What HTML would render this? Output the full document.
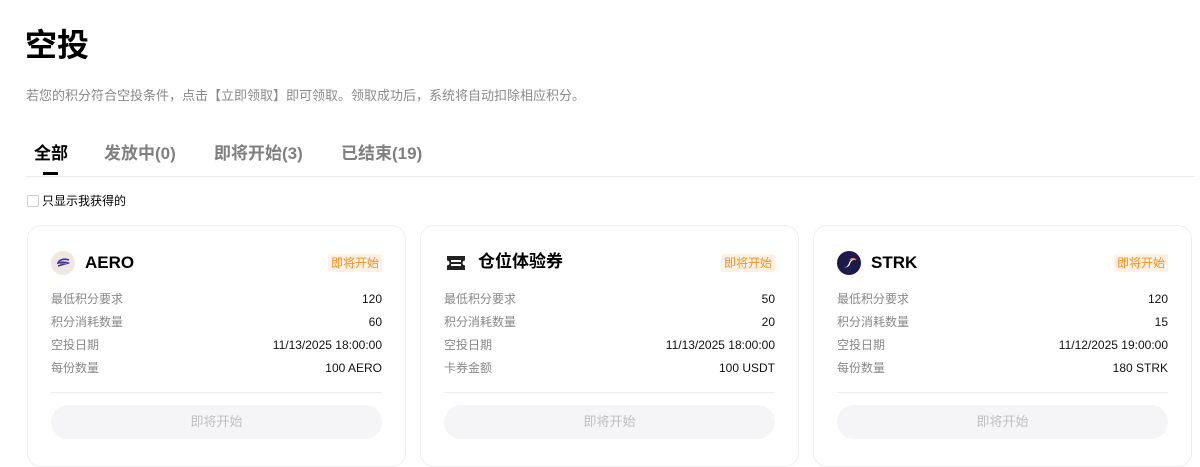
<!DOCTYPE html>
<html><head><meta charset="utf-8"><style>
body{margin:0;background:#fff;font-family:"Liberation Sans","Noto Sans CJK SC",sans-serif;color:#000;width:1200px;height:454px;overflow:hidden;position:relative}
.a{position:absolute}
h1{position:absolute;left:25px;top:23px;margin:0;font-size:32px;font-weight:700;line-height:44px}
.sub{left:26px;top:87px;font-size:13px;color:#8a8a8a;line-height:18px}
.tab{top:142px;font-size:17px;font-weight:700;color:#808080;line-height:24px}
.card{top:225px;width:377px;height:240px;border:1px solid #eee;border-radius:14px;background:#fff}
.hd{position:absolute;left:23px;top:25px;height:24px;display:flex;align-items:center;font-size:17px;font-weight:700;line-height:24px}
.ic{width:24px;height:24px;border-radius:50%;margin-right:10px;flex:none}
.tag{position:absolute;right:23px;top:28px;background:#fff1e6;color:#f7931a;font-size:12px;padding:1px 3px;line-height:16px;border-radius:2px}
.row{position:absolute;left:23px;right:23px;display:flex;justify-content:space-between;font-size:12px;line-height:16px}
.row span:first-child{color:#888}
.row span:last-child{color:#111}
.line{position:absolute;left:23px;right:23px;top:166px;border-top:1px solid #eee}
.btn{position:absolute;left:23px;right:23px;top:179px;height:34px;border-radius:17px;background:#f5f5f7;color:#c0c0c0;font-size:13px;text-align:center;line-height:34px}
</style></head><body>
<h1>空投</h1>
<div class="a sub">若您的积分符合空投条件，点击【立即领取】即可领取。领取成功后，系统将自动扣除相应积分。</div>
<div class="a tab" style="left:34px;color:#000">全部</div>
<div class="a tab" style="left:104px">发放中(0)</div>
<div class="a tab" style="left:214px">即将开始(3)</div>
<div class="a tab" style="left:341px">已结束(19)</div>
<div class="a" style="left:43px;top:172px;width:15px;height:3px;background:#000"></div>
<div class="a" style="left:25px;top:176px;width:1170px;border-top:1px solid #ececec"></div>
<div class="a" style="left:27px;top:195px;width:10px;height:10px;border:1px solid #ccc;border-radius:2px"></div>
<div class="a" style="left:42px;top:193px;font-size:12px;line-height:16px">只显示我获得的</div>

<div class="a card" style="left:27px">
<div class="hd"><div class="ic" style="background:#eee8e0;display:flex;align-items:center;justify-content:center"><svg width="14" height="10" viewBox="0 0 14 10"><path d="M13 2C8 0 3 2 2 5c3-1 7-1 10 0C9 6 5 7 2 8" stroke="#3a2fa8" stroke-width="1.6" fill="none"/><path d="M4 5.5h7" stroke="#e44" stroke-width="1.2"/></svg></div>AERO</div>
<div class="tag">即将开始</div>
<div class="row" style="top:65px"><span>最低积分要求</span><span>120</span></div>
<div class="row" style="top:88px"><span>积分消耗数量</span><span>60</span></div>
<div class="row" style="top:111px"><span>空投日期</span><span>11/13/2025 18:00:00</span></div>
<div class="row" style="top:134px"><span>每份数量</span><span>100 AERO</span></div>
<div class="line"></div><div class="btn">即将开始</div></div>

<div class="a card" style="left:420px">
<div class="ic a" style="left:23px;top:25px;border-radius:0;display:flex;align-items:center;justify-content:center"><svg width="20" height="16" viewBox="0 0 20 16"><path d="M1 1h18v4.5a2.5 2.5 0 0 0 0 5V15H1v-4.5a2.5 2.5 0 0 0 0-5z" fill="#222"/><rect x="5" y="5" width="10" height="2" fill="#fff"/><rect x="5" y="9" width="10" height="2" fill="#fff"/></svg></div>
<div class="a" style="left:57px;top:24px;font-size:17px;font-weight:700;line-height:24px">仓位体验券</div>
<div class="tag">即将开始</div>
<div class="row" style="top:65px"><span>最低积分要求</span><span>50</span></div>
<div class="row" style="top:88px"><span>积分消耗数量</span><span>20</span></div>
<div class="row" style="top:111px"><span>空投日期</span><span>11/13/2025 18:00:00</span></div>
<div class="row" style="top:134px"><span>卡券金额</span><span>100 USDT</span></div>
<div class="line"></div><div class="btn">即将开始</div></div>

<div class="a card" style="left:813px">
<div class="hd"><div class="ic" style="background:#1c1a4a;display:flex;align-items:center;justify-content:center"><svg width="16" height="14" viewBox="0 0 16 14"><path d="M2 11c3 1 5-1 6-4s4-5 7-3c-3-1-5 1-6 4s-4 4-7 3z" fill="#fff"/><path d="M9 4c2-2 4-2 6 0" stroke="#f07c5a" stroke-width="1.5" fill="none"/></svg></div>STRK</div>
<div class="tag">即将开始</div>
<div class="row" style="top:65px"><span>最低积分要求</span><span>120</span></div>
<div class="row" style="top:88px"><span>积分消耗数量</span><span>15</span></div>
<div class="row" style="top:111px"><span>空投日期</span><span>11/12/2025 19:00:00</span></div>
<div class="row" style="top:134px"><span>每份数量</span><span>180 STRK</span></div>
<div class="line"></div><div class="btn">即将开始</div></div>
</body></html>
